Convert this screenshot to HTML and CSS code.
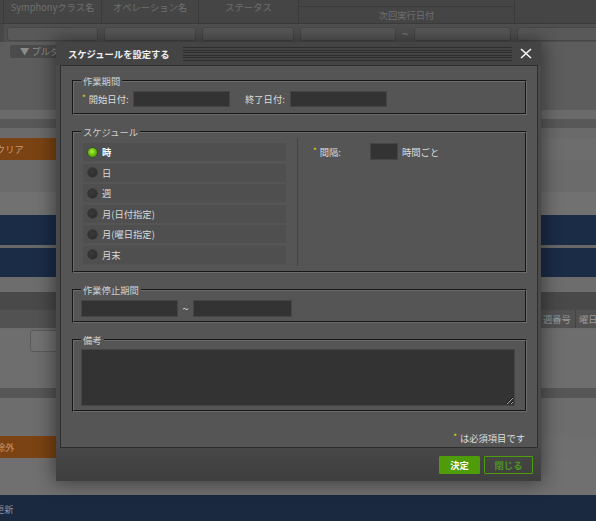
FILE: index.html
```html
<!DOCTYPE html>
<html lang="ja">
<head>
<meta charset="utf-8">
<title>スケジュールを設定する</title>
<link rel="stylesheet" href="styles.css">
</head>
<body>
<div class="page">
  <div class="thead">
    <div class="th c0"></div>
    <div class="th c1">Symphonyクラス名</div>
    <div class="th c2">オペレーション名</div>
    <div class="th c3">ステータス</div>
    <div class="th c4"><div class="group-top"></div><div class="group-label">次回実行日付</div></div>
    <div class="th c5"></div>
  </div>
  <div class="filters">
    <span class="fbox w91"></span>
    <span class="fbox w92"></span>
    <span class="fbox w92"></span>
    <span class="fbox w96"></span>
    <span class="ftilde">~</span>
    <span class="fbox w97"></span>
    <span class="fbox w90"></span>
  </div>
  <div class="band b-top"><span class="pulldown">▼ プルダ</span></div>
  <div class="band h9 g6b"></div>
  <div class="band h9 g57"></div>
  <div class="band h10 g6a"></div>
  <div class="band h22 g6d"><span class="orange">クリア</span></div>
  <div class="band h32 g6b"></div>
  <div class="band h23 g71"></div>
  <div class="band h30 navy"></div>
  <div class="band h3 g68"></div>
  <div class="band h29 navy"></div>
  <div class="band h15 g6d"></div>
  <div class="band h18 g49"></div>
  <div class="band h18 g52 cols"><span class="col-a">週番号</span><span class="col-b">曜日</span></div>
  <div class="band h58 g6e"><span class="ghost-input"></span></div>
  <div class="band h10 g56"></div>
  <div class="band h38 g6d"></div>
  <div class="band h22 g6f"><span class="orange">除外</span></div>
  <div class="band h37 g70"></div>
  <div class="band h28 navy2"><span class="navy-text">更新</span></div>
</div>

<div class="dialog">
  <div class="dlg-title">
    <span class="dlg-title-text">スケジュールを設定する</span>
    <span class="dlg-stripes"></span>
    <span class="dlg-close"><svg width="12" height="11" viewBox="0 0 12 11"><path d="M1 1L11 10M11 1L1 10" stroke="#f4f4f4" stroke-width="1.6" fill="none"/></svg></span>
  </div>
  <div class="dlg-body">
    <fieldset class="fs fs1">
      <legend>作業期間</legend>
      <div class="period-row">
        <span class="lbl lbl-start"><span class="req">*</span>開始日付:</span>
        <input class="inp inp-date" type="text">
        <span class="lbl lbl-end">終了日付:</span>
        <input class="inp inp-date" type="text">
      </div>
    </fieldset>

    <fieldset class="fs fs2">
      <legend>スケジュール</legend>
      <div class="sched">
        <div class="radios">
          <div class="radio-row"><span class="radio on"></span><span class="rtext on">時</span></div>
          <div class="radio-row"><span class="radio"></span><span class="rtext">日</span></div>
          <div class="radio-row"><span class="radio"></span><span class="rtext">週</span></div>
          <div class="radio-row"><span class="radio"></span><span class="rtext">月(日付指定)</span></div>
          <div class="radio-row"><span class="radio"></span><span class="rtext">月(曜日指定)</span></div>
          <div class="radio-row"><span class="radio"></span><span class="rtext">月末</span></div>
        </div>
        <div class="sched-opts">
          <div class="interval-row">
            <span class="lbl lbl-int"><span class="req">*</span>間隔:</span>
            <input class="inp inp-int" type="text">
            <span class="lbl unit">時間ごと</span>
          </div>
        </div>
      </div>
    </fieldset>

    <fieldset class="fs fs3">
      <legend>作業停止期間</legend>
      <div class="stop-row">
        <input class="inp inp-stop1" type="text">
        <span class="tilde">~</span>
        <input class="inp inp-stop2" type="text">
      </div>
    </fieldset>

    <fieldset class="fs fs4">
      <legend>備考</legend>
      <textarea class="note-area"></textarea>
    </fieldset>

    <div class="req-note"><span class="req">*</span>は必須項目です</div>
  </div>
  <div class="dlg-foot">
    <button class="btn btn-ok" type="button">決定</button>
    <button class="btn btn-close" type="button">閉じる</button>
  </div>
</div>
</body>
</html>
```

FILE: styles.css
```css
* { box-sizing: border-box; }
html, body { margin: 0; padding: 0; }
body {
  width: 596px;
  height: 521px;
  overflow: hidden;
  position: relative;
  background: #6c6c6c;
  font-family: "Noto Sans CJK JP", "Noto Sans", sans-serif;
  font-size: 9.3px;
  color: #ddd;
}

/* ---------- background page ---------- */
.page { width: 596px; }
.thead {
  display: flex;
  height: 24px;
  background: #454545;
  border-bottom: 1px solid #3b3b3b;
}
.th {
  border-right: 1px solid #3b3b3b;
  color: #707070;
  text-align: center;
  line-height: 14px;
  white-space: nowrap;
  overflow: hidden;
}
.c0 { width: 4px; }
.c1 { width: 98px; }
.c2 { width: 97px; }
.c3 { width: 100px; }
.c4 { width: 216px; }
.c5 { flex: 1; border-right: 0; }
.group-top { height: 7px; border-bottom: 1px solid #3b3b3b; }
.group-label { line-height: 16px; }

.filters {
  display: flex;
  gap: 6px;
  height: 18px;
  padding: 3px 0 0 3px;
  background: #505050;
  border-left: 4px solid #474747;
}
.fbox {
  flex: none;
  height: 14px;
  background: #595959;
  border: 1px solid #474747;
  border-radius: 3px;
}
.w90 { width: 90px; }
.w91 { width: 91px; }
.w92 { width: 92px; }
.w96 { width: 96px; }
.w97 { width: 97px; }
.ftilde { width: 8px; color: #8a8a8a; font-size: 11px; line-height: 13px; text-align: center; }

.band { width: 596px; }
.b-top { height: 68px; background: #5d5d5d; padding: 3px 0 0 10px; }
.pulldown {
  display: inline-block;
  width: 60px;
  height: 13px;
  line-height: 13px;
  padding: 0 0 0 10px;
  background: #4b4b4b;
  color: #8c8c8c;
  border-radius: 2px;
  white-space: nowrap;
  overflow: hidden;
}
.h3 { height: 3px; } .h9 { height: 9px; } .h10 { height: 10px; } .h15 { height: 15px; }
.h18 { height: 18px; } .h22 { height: 22px; } .h23 { height: 23px; } .h28 { height: 28px; }
.h29 { height: 29px; } .h30 { height: 30px; } .h32 { height: 32px; } .h37 { height: 37px; }
.h38 { height: 38px; } .h58 { height: 58px; }
.g49 { background: #494949; } .g52 { background: #525252; } .g56 { background: #565656; }
.g57 { background: #585858; } .g68 { background: #686868; } .g6a { background: #6a6a6a; }
.g6b { background: #6b6b6b; } .g6d { background: #6d6d6d; } .g6e { background: #6e6e6e; }
.g6f { background: #6f6f6f; } .g70 { background: #707070; } .g71 { background: #717171; }
.navy { background: #1b2c47; }
.navy2 { background: #1b2940; }
.orange {
  display: block;
  width: 90px;
  height: 22px;
  line-height: 22px;
  background: #7b4313;
  color: #c79a74;
  text-indent: -4px;
  white-space: nowrap;
}
.navy-text { display: block; line-height: 28px; color: #8791a3; text-indent: -5px; }
.cols { display: flex; justify-content: flex-end; }
.col-a { width: 35px; border-right: 1px solid #444; color: #9a9a9a; line-height: 18px; padding-left: 2px; }
.col-b { width: 20px; color: #9a9a9a; line-height: 18px; padding-left: 3px; white-space: nowrap; overflow: hidden; }
.ghost-input {
  display: block;
  margin: 2px 0 0 30px;
  width: 40px;
  height: 22px;
  border: 1px solid #5a5a5a;
  border-radius: 3px;
  background: #727272;
}

/* ---------- dialog ---------- */
.dialog {
  position: absolute;
  left: 56px;
  top: 42px;
  width: 485px;
  height: 439px;
  background: #4a4a4a;
  box-shadow: 0 0 18px 2px rgba(0, 0, 0, 0.45);
  display: flex;
  flex-direction: column;
}
.dlg-title {
  height: 23px;
  flex: none;
  display: flex;
  align-items: center;
  padding: 0 9px 0 12px;
  background: #444;
}
.dlg-title-text {
  color: #f2f2f2;
  font-weight: bold;
  white-space: nowrap;
}
.dlg-stripes {
  flex: none;
  width: 329px;
  height: 14px;
  margin-left: 13px;
  background: repeating-linear-gradient(to bottom, #2e2e2e 0, #2e2e2e 1px, transparent 1px, transparent 3px, #2e2e2e 3px, #2e2e2e 4px, transparent 4px, transparent 5px);
}
.dlg-close {
  margin-left: auto;
  display: flex;
  width: 12px;
  height: 11px;
}

.dlg-body {
  height: 383px;
  flex: none;
  margin: 0 3px 0 4px;
  border: 1px solid #2e2e2e;
  background: #555;
  padding: 9px 10px 0 11px;
}
.fs {
  margin: 0 0 11px 0;
  padding: 0 10px 0 7px;
  border: 2px groove #6c6c6c;
  min-width: 0;
}
.fs legend {
  padding: 0 2px;
  line-height: 12px;
  color: #cfcfcf;
}
.lbl { color: #dedede; white-space: nowrap; }
.req { color: #f0e000; font-size: 8px; vertical-align: 2px; margin-right: 3px; }
.inp {
  display: block;
  margin: 0;
  padding: 0;
  background: #333;
  border: 1px solid #454545;
  border-radius: 0;
  outline: none;
  font: inherit;
  color: #ddd;
}

/* 作業期間 */
.fs1 { padding-top: 4px; padding-bottom: 6px; }
.period-row { display: flex; align-items: center; height: 16px; margin-left: 1px; }
.lbl-start { width: 51px; }
.lbl-end { width: 45px; margin-left: 15px; }
.inp-date { width: 97px; height: 16px; }

/* スケジュール */
.fs2 { padding-bottom: 5px; }
.sched { display: flex; }
.radios {
  width: 203px;
  margin-left: 2px;
  padding: 5px 0 2px;
  display: flex;
  flex-direction: column;
  gap: 2.6px;
}
.radio-row {
  height: 18px;
  background: #4f4f4f;
  display: flex;
  align-items: center;
  padding-left: 5px;
  gap: 5px;
}
.radio {
  width: 9px;
  height: 9px;
  border-radius: 50%;
  background: radial-gradient(circle at 45% 40%, #3a3a3a 0, #2e2e2e 70%);
  box-shadow: 0 0 0 0.5px #262626;
}
.radio.on {
  background: radial-gradient(circle at 45% 40%, #a8f040 0, #6cc010 45%, #3c7a00 100%);
  box-shadow: 0 0 0 0.5px #2a4a00;
}
.rtext { color: #dadada; }
.rtext.on { color: #fff; font-weight: bold; }
.sched-opts {
  flex: 1;
  margin-left: 11px;
  border-left: 1px solid #444;
  padding: 5px 0 0 15px;
}
.interval-row { display: flex; align-items: center; height: 17px; }
.lbl-int { width: 57px; }
.inp-int { width: 28px; height: 17px; }
.unit { margin-left: 4px; }

/* 作業停止期間 */
.fs3 { padding-top: 4px; padding-bottom: 4px; }
.stop-row { display: flex; align-items: center; height: 17px; }
.inp-stop1 { width: 97px; height: 17px; }
.inp-stop2 { width: 99px; height: 17px; }
.tilde { width: 15px; text-align: center; color: #ddd; font-size: 11px; }

/* 備考 */
.fs4 { padding-top: 3px; padding-bottom: 4px; }
.note-area {
  display: block;
  width: 434px;
  height: 57px;
  margin: 0;
  background: #333;
  border: 1px solid #454545;
  outline: none;
  resize: both;
  font: inherit;
  color: #ddd;
}

.req-note {
  margin: 19px 2px 0 0;
  text-align: right;
  line-height: 12px;
  color: #dedede;
}

/* footer */
.dlg-foot {
  height: 33px;
  flex: none;
  display: flex;
  justify-content: flex-end;
  gap: 4px;
  padding: 8px 8px 0 0;
  background: linear-gradient(#474747, #3e3e3e);
}
.btn {
  height: 18px;
  margin: 0;
  padding: 0;
  font: inherit;
  font-weight: bold;
  border-radius: 1px;
  cursor: pointer;
}
.btn-ok { width: 41px; background: #4f9c0b; border: 1px solid #4f9c0b; color: #fff; }
.btn-close { width: 49px; background: transparent; border: 1px solid #4f9c0b; color: #4e9322; }
```
